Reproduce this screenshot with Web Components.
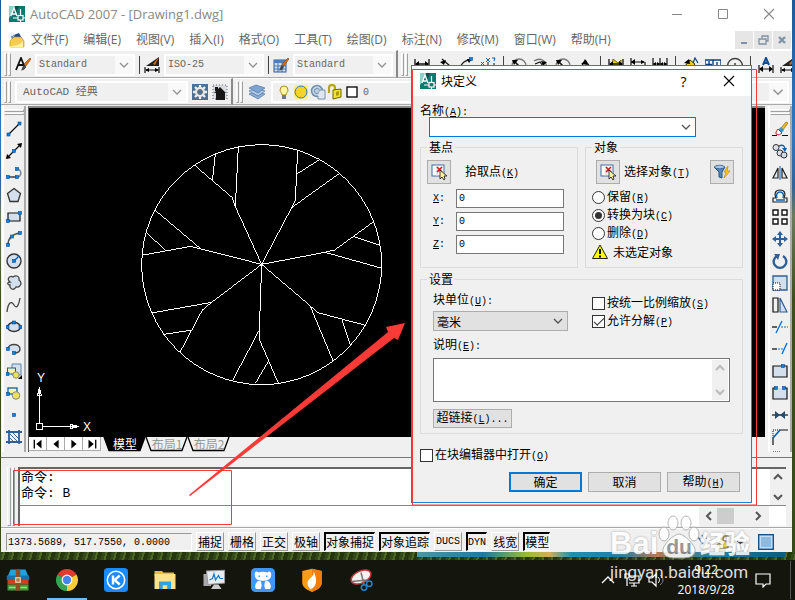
<!DOCTYPE html>
<html lang="zh-CN">
<head>
<meta charset="utf-8">
<title>AutoCAD 2007 - [Drawing1.dwg]</title>
<style>
html,body{margin:0;height:100%}
body{overflow:hidden;font:12px/14px "Noto Sans CJK SC",sans-serif;color:#000;
 --ui:"Open Sans","Noto Sans CJK SC",sans-serif;--face:#f0f0f0;--red:#f93a37;--blue:#0078d7}
</style>
</head>
<body>
<cad-desktop></cad-desktop>
<script>
const define=(name,css,html)=>customElements.define(name,class extends HTMLElement{
  constructor(){super();const r=this.attachShadow({mode:'open'});
    r.innerHTML='<style>*{box-sizing:border-box}'+css+'</style>'+(typeof html==='string'?html:'');
    this.build=typeof html==='function'?html:null;}
  connectedCallback(){if(this.build&&!this.done){this.done=true;this.shadowRoot.innerHTML+=this.build(this);} }
});

const B='#0a5fb4',N='#2f5f95';
const dot=(x,y)=>`<rect x="${x-1.5}" y="${y-1.5}" width="3" height="3" fill="#0a84e0" stroke="#044a90" stroke-width=".6"/>`;
const k=(d,c='#111',w=1.2,f='none')=>`<path d="${d}" fill="${f}" stroke="${c}" stroke-width="${w}"/>`;
const G='#d3dfec';
const brush='<path d="M15 1l1 1-5 7-2-2z" fill="#d96d10" stroke="#6a3405" stroke-width=".5"/><path d="M9 8l2 1.500c-1 3-3 4-5 4 1-1 1-4 3-5.500z" fill="#444"/>';
const dim=k('M1 2V12M15 2V12M2 7H14','#111',1.3)+'<path d="M1 7l4-3v6zM15 7l-4-3v6z"/>';
const ICONS={
 logo:'<rect width="16" height="16" fill="#0d7a72"/><path d="M0 0h6L3 8 0 12z" fill="#8fd0c8"/><path d="M6 0h4l-3 7z" fill="#045048"/><path d="M2 10L5 2l3 8M3 8h4" fill="none" stroke="#fff" stroke-width="1.300"/><path d="M4 12h5m5 0h2M11.500 3v6m0 5v2" stroke="#fff" stroke-width="1.200"/><rect x="9" y="9.500" width="5" height="4.500" fill="#0d7a72" stroke="#fff" stroke-width="1.200"/>',
 doc:'<path d="M2 4L10 1l5 9-10 5z" fill="#1d4f8c"/><path d="M1 9l4-4h7l3 4v6H1z" fill="#f5cc4e" stroke="#c58d19" stroke-width=".6"/><path d="M1 14c5 0 10-1 13-5v6H1z" fill="#fff0a8"/><path d="M3 0v6M0 3h6M1 1l4 4m0-4L1 5" stroke="#dbeaff" stroke-width=".8"/>',
 textstyle:k('M1 13L6 1l4 10M3 8h6','#111',1.8)+brush,
 dimstyle:'<path d="M2 9L15 0v9z" fill="#222"/><path d="M15 0l-6 7 2 1z" fill="#d96d10"/>'+k('M1 10v6M15 10v6M2 13h12')+'<path d="M1 13l4-2v4zM15 13l-4-2v4z"/>',
 tablestyle:'<rect x="1" y="3" width="12" height="12" fill="#cfe0f4" stroke="#2a5d9c"/><rect x="1" y="3" width="12" height="3" fill="#4a7fc0"/>'+k('M1 9h12M1 12h12M5 6v9M9 6v9','#2a5d9c',.8)+brush,
 dim,dimal:k('M2 9L12 15M6 2l8 7')+'<path d="M4 5l6-2-2 5z"/>',
 dimarc:k('M1 14C3 5 8 3 14 2','#222',1.4)+'<path d="M9 2l5 0-3 4z"/>'+dot(13,2),
 dimord:k('M3 8v6M8 5v9M14 6v8','#111',1)+k('M1 5l3 3m0-3L1 8M6 1l4 4m0-4L6 5M12 1h3l-1 3','#0a5fb4',1),
 dimrad:'<circle cx="8" cy="9" r="7" fill="none" stroke="#777" stroke-width="1.400"/>'+k('M8 9L3 4','#111',1.6)+'<path d="M1 3l6 0-4 5z"/>',
 jog:k('M1 4C7 0 13 3 14 11','#777',1.4)+k('M2 7l5-2 3 4','#111')+'<path d="M8 4l6 1-4 4z"/>',
 angle:k('M2 14L8 3l6 8')+'<path d="M4 7l5-4 2 5z"/>',
 quick:'<path d="M5 2l5 4 3-3v9H4z" fill="#f0d530" stroke="#7c6500"/>'+dim,
 base:k('M1 1v12M15 5v8M1 5h13')+'<path d="M1 5l4-3v6zM15 5l-4-2v4z"/>',
 cont:k('M1 1v12M8 1v12M15 1v12M1 7h14')+'<path d="M1 7l3-2v4zM8 7L5 5v4zM8 7l3-2v4zM15 7l-3-2v4z"/>',
 leader:'<path d="M2 9l5-6 5 4-5 6z" fill="#efcc1d" stroke="#342b00"/><path d="M1 6l5-4 1 5z"/>'+k('M10 6l2-5 3 5','#0a4080',1.2),
 tol:'<rect y="3" width="16" height="9" fill="#fff" stroke="#0a4080" stroke-width="1.500"/>'+k('M8 3v9M4 4v7M1 7.500h6M12 5v5','#0a4080',1.400),
 center:'<circle cx="8" cy="9" r="7.500" fill="none" stroke="#444" stroke-width="1.300"/>'+k('M8 6v6M5 9h6'),
 dimtext:k('M5 8L8 1l3 7M6 6h4','#0a4a98',2)+k('M1 8v8M15 8v8M2 12h12')+'<path d="M1 12l4-3v6zM15 12l-4-3v6z"/>',
 gear:'<rect width="16" height="16" fill="#4b7096"/><path d="M8 1v14M1 8h14M3 3l10 10M13 3L3 13" stroke="#eee" stroke-width="2.400"/><circle cx="8" cy="8" r="5" fill="#e8e8e8"/><circle cx="8" cy="8" r="2.500" fill="#4b7096" stroke="#777"/>',
 home:'<rect x="1" y="1" width="14" height="14" fill="#d9dde2" stroke="#666" stroke-dasharray="1 2"/><path d="M2 9l6-6 6 6h-1v7H4V9z" fill="#161616"/><path d="M3 3h3v4H3z" fill="#161616"/>',
 layers:'<path d="M0 10l7-3 9 3-7 5z" fill="#8cabd0" stroke="#4c75a8" stroke-width=".7"/><path d="M0 7l7-3 9 3-7 5z" fill="#b3cae5" stroke="#4c75a8" stroke-width=".7"/><path d="M0 4l7-3 9 3-7 5z" fill="#7da3d0" stroke="#4c75a8" stroke-width=".7"/>',
 bulb:'<path d="M4 6a4 4 0 1 1 8 0c0 2-2 3-2 5H6c0-2-2-3-2-5z" fill="#fff8a0" stroke="#aa8a20"/><path d="M6 11h4v4H6z" fill="#6c7a8c"/>',
 sun:'<rect x="1" y="1" width="14" height="14" rx="2" fill="#fff27a"/><circle cx="8" cy="8" r="6" fill="#f6d528" stroke="#3977b8"/>',
 freeze:'<circle cx="7" cy="7" r="5.500" fill="#c2d2e2" stroke="#6f8ead" stroke-width="1.500"/><circle cx="7" cy="7" r="2.500" fill="none" stroke="#6f8ead"/>'+k('M10 6h5v9H8v-3','#7890a8',1,'#dfe8f0'),
 lock:k('M2 9V4a3 3 0 0 1 6 0v4','#b5a800',2.200)+'<path d="M6 6l8-1v8l-8 2z" fill="#f1e233" stroke="#6e6400"/><path d="M9 8l3-1v4l-3 1z" fill="#ac9c00"/>',
 color:'<rect x="3" y="3" width="10" height="10" fill="#fff" stroke="#000" stroke-width="1.300"/>',
 line:k('M2.500 13.500l11-11')+dot(2.500,13.500)+dot(13.500,2.500),
 xline:k('M1 15L15 1')+'<path d="M0 16l1-5 4 4zM16 0l-1 5-4-4z"/>'+dot(8,8),
 pline:k('M1 12h10','#111')+k('M11 12c5 0 5-8 0-8','#7a8a9a',1.600)+dot(2,12)+dot(11,12)+dot(11,4),
 polygon:k('M8 1.500l6.500 5-2.500 8H4L1.500 6.500z','#333',1.300,G),
 rect:k('M2 4h12v8H2z','#111',1.200,G)+dot(2,12)+dot(14,4),
 arc:k('M2 14C2 7 7 3 14 2','#555',1.500)+dot(2,14)+dot(6,5.500)+dot(14,2),
 circle:'<circle cx="8" cy="8" r="7" fill="'+G+'" stroke="#333" stroke-width="1.400"/>'+k('M8 8l5-5','#0a5fb4')+dot(8,8),
 cloud:k('M4 7C0 4 4 0 7 2c3-2 7-1 6 3 4 3 1 8-3 7-2 4-7 2-6-2-3 0-3-3 0-3z','#444',1.300,G),
 spline:k('M1 15C2 6 5 3 8 8s5-1 6-7','#444',1.300),
 ellipse:'<ellipse cx="8" cy="8" rx="6.500" ry="4.500" fill="'+G+'" stroke="#333" stroke-width="1.400"/>'+dot(1.500,8)+dot(14.500,8)+dot(8,3.500),
 earc:k('M2 8c0-6 12-6 12 0 0 3-2 4-6 4','#444',1.400,G)+dot(2,8)+dot(8,12),
 insert:k('M6 1h9v11H6z','#5d84ad',1,G)+'<rect x="1.500" y="5" width="8" height="6" fill="#fff59a" stroke="#0a5fb4"/><circle cx="10" cy="12" r="3.200" fill="#ece25a" stroke="#888"/><path d="M12 16h4v-4z"/>'+dot(1.500,11),
 block:'<rect x="2" y="3" width="9" height="6" fill="#fff59a" stroke="#0a5fb4" stroke-width="1.300"/><circle cx="10" cy="10.500" r="3.800" fill="#ece25a" stroke="#888"/>'+dot(2,9),
 point:dot(8,8),
 hatch:k('M3 1v14M13 1v14M0 3h16M0 13h16',N,1.800)+k('M4 5l8 8M4 9l4 4M7 4l6 6',N,.9),
 grad:k('M3 2v14M13 2v14M0 4h16','#16436e',2),
 erase:'<path d="M9 7l5-6 2 1-5 7z" fill="#efbc22" stroke="#84510a" stroke-width=".6"/><path d="M6 9l3-3 3 3-3 4z" fill="#4c8dd0"/><path d="M4 11l2-3 4 4-3 2-3-1z" fill="#fff" stroke="#b23"/>'+k('M0 14.500h5m5 0h6','#111',1),
 copy:'<circle cx="4" cy="4.500" r="3" fill="#dde" stroke="#333"/><circle cx="8" cy="10" r="3" fill="#dde" stroke="#333"/><circle cx="12" cy="12" r="3" fill="#cdd8e5" stroke="#333"/>'+k('M7 3c4-2 6 0 6 4',B,1.500)+'<path d="M10 5h5l-2 4z" fill="#0a5fb4"/>',
 mirror:k('M8 1v14',B,1)+k('M6 3v10H1zM10 3v10h5z','#222',1.200,'#e6ecf2'),
 offset:k('M1 15h14v-4h-3c2-4 1-8-4-8S2 7 4 11H1z','#222',1.200)+k('M4 13h9M5 11c-3-8 9-8 6 0',B,1.400),
 array:k('M1 1h5v5H1zM10 1h5v5h-5zM1 10h5v5H1zM10 10h5v5h-5z','#111',1.400,'#fff'),
 move:k('M8 2v12M2 8h12',N,2)+'<path d="M8 0l3 4H5zM8 16l-3-4h6zM0 8l4-3v6zM16 8l-4-3v6z" fill="#2f5f95"/>',
 rotate:k('M5 3a6.300 6.300 0 1 0 6 0',N,2.400)+'<path d="M2 1l6 0-2 6z" fill="#2f5f95"/>',
 scale:k('M1 1h14v14H1z',N,1.300,G)+'<path d="M1 8h7v7H1z" fill="#fff" stroke="#111" stroke-dasharray="1 1"/>',
 stretch:k('M1 1h5v14H1z','#111',1.200)+k('M8 1l7 14H8z',N,1.200,G),
 trim:k('M0 8h5','#111',1.300)+'<path d="M9 8h7" stroke="#0a73d8" stroke-dasharray="2 1"/>'+k('M4 14L10 2','#0a73d8',1.400),
 extend:k('M0 8h5','#111',1.300)+'<path d="M6 8h6" stroke="#0a73d8" stroke-dasharray="2 1"/>'+k('M10 13l5-11','#0a73d8',1.400),
 break1:k('M1 3h14v11H1z','#111',1.200,G)+dot(11,3),
 break2:'<path d="M1 3h14v11H1z" fill="#d3dfec"/>'+k('M4 3H1v11h14V3h-3','#111',1.200)+dot(4,3)+dot(12,3),
 join:k('M0 8h16','#111',1.200)+'<path d="M3 4l5 4-5 4zM13 4L8 8l5 4z" fill="#244a70"/>',
 chamfer:k('M8 1h8M1 9v7','#111',1.200)+'<path d="M1 9V1h7" fill="none" stroke="#111" stroke-dasharray="1 1"/>'+k('M1 9l7-8',B,1.600),
 fillet:k('M8 2h8M1 10v6','#111',1.200)+'<path d="M1 9V1h7" fill="none" stroke="#111" stroke-dasharray="1 1"/>'+k('M1 10C2 4 5 3 14 2',B,1.800),
 pick:'<rect x="1" y="1" width="12" height="11" fill="#fff" stroke="#3b6ca8"/><path d="M6 1v11M6 8h7" stroke="#bcd0e8"/><path d="M6 3l5 5m0-5L6 8" stroke="#d81515" stroke-width="1.600"/><path d="M9 6v9l2-2 2 3 1-1-1-3h3z" fill="#fff4a0" stroke="#111" stroke-width=".8"/>',
 filter:'<path d="M0 3h11L8 8v6l-3-1V8z" fill="#5986b8" stroke="#23527f"/><ellipse cx="5.500" cy="3" rx="5" ry="1.800" fill="#a7c3df" stroke="#23527f" stroke-width=".7"/><path d="M14 2l-4 6h2l-2 6 6-7h-3z" fill="#ffcf1c" stroke="#b67a00" stroke-width=".6"/>',
 warn:'<path d="M8 1l7.500 13.500H.5z" fill="#ff0" stroke="#222" stroke-linejoin="round"/><path d="M8 5v5M8 11.500v2" stroke="#000" stroke-width="2"/>',
 down:k('M4 6l4 4 4-4','#555',1.300),up:k('M4 10l4-4 4 4','currentColor',2),dn:k('M4 6l4 4 4-4','currentColor',2),
 lt:k('M10 4L6 8l4 4','currentColor',2),rt:k('M6 4l4 4-4 4','currentColor',2),
 min:k('M3 8.500h10','#888',1),max:k('M3.500 3.500h9v9h-9z','#888',1),close:k('M3 3l10 10M13 3L3 13','currentColor',1.100),
 smin:k('M5 11h6','#8092a5',2),srest:k('M7 6V4h6v5h-2M4 7h7v5H4z','#8092a5',1.300),sclose:k('M5 5l6 6m0-6l-6 6','#8092a5',2.400),
 first:'<path d="M3 3h1.500v10H3zM12 3v10L6 8z"/>',prev:'<path d="M11 3v10L5 8z"/>',next:'<path d="M5 3v10l6-5z"/>',last:'<path d="M4 3v10l6-5zM11.500 3H13v10h-1.500z"/>',
 winrar:'<path d="M3 1h10l2 5H1z" fill="#1ba4dd"/><path d="M.500 5h15v3H.500z" fill="#1276ad"/><path d="M1 8h14v3H1z" fill="#cf3c25"/><path d="M1 11h14v4H1z" fill="#3c9c3c"/><path d="M2 13h12" stroke="#b0dc62"/><path d="M6.500 1h3v14h-3z" fill="#8f4e22"/><rect x="6.500" y="6.500" width="3" height="3" fill="#a9754a" stroke="#e6d8b6" stroke-width=".8"/>',
 chrome:'<path d="M8 8L1.700 4.300A7.300 7.300 0 0 1 14.300 4.300z" fill="#e23b2e"/><path d="M8 8l6.300-3.700A7.300 7.300 0 0 1 8 15.300z" fill="#f9cc34"/><path d="M8 8v7.300A7.300 7.300 0 0 1 1.700 4.300z" fill="#35a352"/><circle cx="8" cy="8" r="3.600" fill="#fff"/><circle cx="8" cy="8" r="2.800" fill="#4384ee"/>',
 kapp:'<rect width="16" height="16" rx="2.500" fill="#1a8bff"/><circle cx="8" cy="8" r="5.800" fill="none" stroke="#fff"/><path d="M6 5v6M10.500 5L7 8l3.500 3" fill="none" stroke="#fff" stroke-width="1.600"/>',
 folder:'<path d="M1 2h5l1 1h7v2H1z" fill="#e7b84b"/><path d="M1 4h14v10H1z" fill="#ffe28a"/><path d="M4 14V9h8v5h-2.500v-2.500h-3V14z" fill="#2fa3dd"/>',
 monitor:'<path d="M1 4h5v8H1z" fill="#aaa"/><path d="M3 2l12-.500v8.500l-11 1z" fill="#e9eef2" stroke="#999" stroke-width=".7"/><path d="M5 8l2-1 1-3 1 4 2-3 1 2h2" fill="none" stroke="#1f7bc8" stroke-width=".8"/><path d="M8 11h3l2 3H6z" fill="#ccc"/>',
 bear:'<rect width="16" height="16" rx="3" fill="#3e97fb"/><path d="M2.500 4.500C2.500 2 4 2 5 3c2-.6 4-.6 6 0 1-1 2.500-1 2.500 1.500 0 3-2.500 4-5.500 4s-5.500-1-5.500-4z" fill="#fff"/><path d="M5 8.500c-2 1-3 4.500-1.500 5.500h3C7.500 12 7 10 6.500 8.800zM11 8.500c2 1 3 4.500 1.500 5.500h-3C8.500 12 9 10 9.500 8.800z" fill="#fff"/><path d="M5 5.500h1M10 5.500h1" stroke="#3e97fb"/>',
 flame:'<path d="M1.500 2L8 .500 14.500 2v8c0 3-4 5-6.500 6-2.500-1-6.500-3-6.500-6z" fill="#ff9b17"/><path d="M8 .500L14.500 2v8c0 3-4 5-6.500 6z" fill="#f07c0a"/><path d="M9 2c1 4-4 5-4 8 0 2 1 3 2 4 4-1 5-6 2-12z" fill="#fff"/>',
 snip:'<ellipse cx="8" cy="6" rx="7" ry="4" transform="rotate(-25 8 6)" fill="#f6f0f0" stroke="#c13a3a"/><path d="M2 9l10-1M8 3l2 8" stroke="#777"/><circle cx="10" cy="13" r="1.800" fill="none" stroke="#2584c8"/><circle cx="13.500" cy="10.500" r="1.800" fill="none" stroke="#2584c8"/>',
 chev:k('M2 11l6-6 6 6','#fff',1.300),net:k('M5 4h10v7H5M10 11v3M7 14h6','#fff',1.200)+k('M1 2h4v4H1zM3 6v8','#fff',1.200),
 vol:k('M1 6h3l4-4v12l-4-4H1z','#fff',1.200)+k('M10 5c2 2 2 4 0 6','#fff',1)+k('M12 3c4 3 4 7 0 10','#888',1),
 note:k('M1 2h14v10h-4l-3 3v-3H1z','#fff',1.200),
 sat:k('M2 3l6 8M6 1l4 9M11 4l-4 8M14 6c-3 2-6 4-8 9','#49698d',1.500),
 tlock:k('M7 8V5a3 3 0 0 1 6 0v4','#968a3e',1.800)+'<path d="M4 7h8v7H4z" fill="#e7cf46" stroke="#665a10"/><path d="M0 11l4-3v6z" fill="#8a7a20"/>',
 tri:'<path d="M1 6h14l-7 6z" fill="#222"/>',
 clean:'<rect x=".7" y=".7" width="14.600" height="14.600" fill="#c5dcf0" stroke="#1b4f80" stroke-width="1.400"/><rect x="3" y="3" width="10" height="10" fill="#8fbae0"/>'
};
define('cad-icon',':host{display:inline-flex;flex:none;width:16px;height:16px}svg{width:100%;height:100%;overflow:hidden}',
 h=>`<svg viewBox="0 0 16 16" aria-hidden="true">${ICONS[h.getAttribute('name')]||''}</svg>`);
const I=(n,c='')=>`<cad-icon name="${n}"${c?` class="${c}"`:''}></cad-icon>`;

define('cad-grip',':host{display:flex;flex:none;gap:1px;width:7px;align-self:stretch}:host([flat]){flex-direction:column;width:20px;height:6px}i{flex:1;border:1px solid;border-color:#fff #a0a0a0 #a0a0a0 #fff}','<i></i><i></i>');
define('cad-sep',':host{width:1px;height:18px;background:#444;flex:none}','');

define('cad-combo',`:host{display:grid;flex:none;border:2px solid #fff;background:#f0f0f0;height:22px;color:#666}
 select,cad-icon{grid-area:1/1}select{appearance:none;border:0;background:none;width:100%;font:10px "Liberation Mono","Noto Sans CJK SC",monospace;color:inherit;padding:0 2px;margin:0;min-width:0;opacity:1}
 cad-icon{justify-self:end;width:18px;height:18px;background:#fff;padding:1px;opacity:.6;pointer-events:none}
 :host([kind=dialog]){height:20px;border:1px solid #adadad;background:#e1e1e1;color:#000}
 :host([kind=dialog]) select{font:12px "Noto Sans CJK SC",sans-serif;padding:0 3px}
 :host([kind=dialog]) cad-icon{background:none;opacity:1}
 :host([kind=name]){height:20px;border:1px solid var(--blue);background:#fff;color:#000}:host([kind=name]) cad-icon{opacity:1}
 :host([wide]) select{font-family:"Liberation Mono","Noto Sans CJK SC",monospace;font-size:11px;padding-left:6px}`,
 h=>`<select aria-label="${h.getAttribute('label')}"><option>${h.getAttribute('value')||''}</option></select>${I('down')}`);

define('cad-titlebar',`:host{display:flex;align-items:center;height:28px;background:#fff;padding:0 17px 0 8px;font:13px/18px var(--ui);color:#888}
 .t{margin-left:5px;flex:1}button{border:0;background:none;padding:0;width:46px;height:28px;display:grid;place-items:center;color:#888}div{display:flex;margin-right:-17px}`,
 `${I('logo')}<span class="t">AutoCAD 2007 - [Drawing1.dwg]</span><div><button aria-label="最小化">${I('min')}</button><button aria-label="最大化">${I('max')}</button><button aria-label="关闭">${I('close')}</button></div>`);

define('cad-menubar',`:host{display:flex;align-items:center;height:22px;background:#fff;padding:1px 1px 0 8px;font:12px/18px var(--ui);color:#666}
 nav{display:flex;flex:1;gap:15px;margin-left:6px}nav button{border:0;background:none;padding:0;font:inherit;color:inherit;white-space:nowrap}
 .w{display:flex;gap:1px}.w button{border:0;padding:0;background:#e6e6e6;width:18px;height:18px;display:grid;place-items:center}`,
 `${I('doc')}<nav>${['文件(F)','编辑(E)','视图(V)','插入(I)','格式(O)','工具(T)','绘图(D)','标注(N)','修改(M)','窗口(W)','帮助(H)'].map(t=>`<button>${t}</button>`).join('')}</nav>
 <div class="w"><button aria-label="最小化图形">${I('smin')}</button><button aria-label="还原图形">${I('srest')}</button><button aria-label="关闭图形">${I('sclose')}</button></div>`);

define('cad-toolbar',`:host{display:flex;align-items:center;gap:4px;padding:2px 3px 1px;min-width:0;overflow:hidden;border-right:2px solid #888;border-bottom:1px solid #aaa;border-top:1px solid #fff}
 :host([last]){flex:1;border-right:0}:host([loose]){gap:6px}::slotted(cad-sep){margin:0 1px}`,'<cad-grip></cad-grip><slot></slot>');

define('cad-toolrows',`:host{display:block;background:var(--face)}.r{display:flex;height:28px}.r+.r{height:27px}
 cad-combo{width:100px}cad-combo.ws{width:173px}.lay{display:flex;align-items:center;flex:1;gap:1px;border:2px solid #fff;height:22px;padding-left:3px;font:10px "Liberation Mono",monospace;color:#666;min-width:0}
 .lay span{flex:1;margin-left:2px}.lay cad-icon:last-child{background:#fff;width:18px;height:18px;opacity:.6}.s cad-sep{margin:0}`,
 `<div class="r"><cad-toolbar class="s">${I('textstyle')}<cad-combo label="文字样式" value="Standard"></cad-combo><cad-sep></cad-sep>${I('dimstyle')}<cad-combo label="标注样式" value="ISO-25"></cad-combo><cad-sep></cad-sep>${I('tablestyle')}<cad-combo label="表格样式" value="Standard"></cad-combo></cad-toolbar>
 <cad-toolbar last loose>${['dim','dimal','dimarc','dimord'].map(n=>I(n)).join('')}<cad-sep></cad-sep>${['dimrad','jog','dimrad','angle'].map(n=>I(n)).join('')}<cad-sep></cad-sep>${['quick','base','cont'].map(n=>I(n)).join('')}<cad-sep></cad-sep>${['leader','tol','center'].map(n=>I(n)).join('')}<cad-sep></cad-sep>${I('dimtext')}${I('dimstyle')}</cad-toolbar></div>
 <div class="r"><cad-toolbar><cad-combo wide class="ws" label="工作空间" value="AutoCAD 经典"></cad-combo>${I('gear')}${I('home')}</cad-toolbar>
 <cad-toolbar last loose>${I('layers')}<div class="lay">${['bulb','sun','freeze','lock','color'].map(n=>I(n)).join('')}<span>0</span>${I('down')}</div></cad-toolbar></div>`);

define('cad-toolstrip',`:host{display:flex;flex-direction:column;align-items:center;flex:none;width:24px;height:100%;min-height:0;padding-top:3px;gap:6px;overflow:hidden;border-left:2px solid #fff;border-right:2px solid #aaa}
 cad-grip{align-self:center}`,
 h=>`<cad-grip flat></cad-grip>${h.getAttribute('tools').split(' ').map(n=>I(n)).join('')}`);

define('cad-drawing',`:host{display:block;flex:1;min-height:0;background:#000;overflow:hidden}svg{display:block;width:100%;height:100%}`,
 `<svg shape-rendering="crispEdges" fill="none" stroke="#fff" aria-label="图形">
 <g transform="translate(101 22) scale(.33333)" stroke-width="3"><circle cx="395" cy="404" r="360"/>
 <path d="M395 403L316 230 325 50M316 230L306 202 193 105M247 152L256 72M395 403L485 233 627 131M485 233L496 210 503 61M502 131L568 89M395 403L585 367 753 414M585 367L614 360 731 275M671 320L748 345M395 403L540 527 609 692M540 527L563 548 707 586M636 569L661 645M395 403L388 600 307 753M388 600V628L446 762M416 693L376 760M395 403L245 517 65 549M245 517L217 540 151 665M183 601L100 613M395 403L213 357 76 241M213 357L182 349 35 376M107 362L49 307"/></g>
 <g transform="translate(-29 -108)"><path d="M36.500 423.500h6v6h-6zM39.500 423V388M43 426.500h35M37.500 395.500h4l-2-8zM70.500 424.500v4l8-2z"/>
 </g><g fill="#fff" stroke="none" font-family="Liberation Sans,sans-serif" font-size="12" transform="translate(-29 -108)"><text x="83" y="431">X</text><text x="37" y="382">Y</text></g></svg>`);

define('cad-layouts',`:host{display:flex;height:15px;background:var(--face);flex:none;font:12px/13px "Noto Sans CJK SC",sans-serif}
 .n{display:flex}.n button{padding:0;width:18px;height:14px;border:0;border-right:1px solid #aaa;border-bottom:1px solid #aaa;background:#fff;display:grid;place-items:center}.n cad-icon{width:14px;height:14px}
 .t{display:flex;margin-left:3px}.t button{border:0;background:none;padding:0;font:inherit;height:15px;width:42px;color:#999;display:grid}.t button>*{grid-area:1/1}svg{width:42px;height:15px;overflow:visible}span{align-self:start;justify-self:center}.t .on{color:#fff}`,
 `<div class="n">${['first','prev','next','last'].map((n,i)=>`<button aria-label="布局导航 ${i+1}">${I(n)}</button>`).join('')}</div><div class="t">${[['模型',1],['布局1'],['布局2']].map(([t,on])=>`<button class="${on?'on':''}"><svg viewBox="0 0 42 15"><path d="M0 0l5 13.500h31l5-13.500" fill="${on?'#000':'#f0f0f0'}" stroke="#000" stroke-width="1.300"/></svg><span>${t}</span></button>`).join('')}</div>`);

define('cad-workspace',`:host{display:flex;flex:1;min-height:0;background:var(--face);padding:1px 0 5px 1px;border-bottom:1px solid #777}
 .c{display:flex;flex-direction:column;flex:1;min-width:0;margin:0 3px 0 2px;border-top:2px solid #888;border-left:1px solid #555}`,
 `<cad-toolstrip tools="line xline pline polygon rect arc circle cloud spline ellipse earc insert block point hatch grad"></cad-toolstrip>
 <div class="c"><cad-drawing></cad-drawing><cad-layouts></cad-layouts></div>
 <cad-toolstrip tools="erase copy mirror offset array move rotate scale stretch trim extend break1 break2 join chamfer fillet"></cad-toolstrip>`);

define('cad-command',`:host{display:flex;height:70px;background:var(--face);padding:9px 6px 1px 6px;border-bottom:1px solid #aaa;gap:3px;color:#555;flex:none}
 cad-grip{width:8px}.m{flex:1;display:flex;flex-direction:column;border:solid #666;border-width:2px 0 0 2px;background:#fff;min-width:0}
 .h{flex:1;display:flex;border-bottom:1px solid #888}.x{flex:1;font:13px/16px "Liberation Mono","Noto Sans CJK SC",monospace;color:#000;padding:1px 0 0 1px}.x div{height:16px;white-space:pre}
 .v{display:flex;flex-direction:column;justify-content:space-between;background:var(--face);width:16px}
 .i{display:flex;height:20px}input{flex:1;min-width:0;border:0;background:none;padding:0 2px;font:12px "Liberation Mono",monospace}
 .s{display:flex;align-items:center;background:var(--face);width:70px;margin-right:17px;padding-left:2px}.s b{width:17px;height:16px;background:#cdcdcd;margin-right:16px}`,
 `<cad-grip></cad-grip><div class="m"><div class="h"><div class="x"><div>命令:</div><div>命令: B</div></div><div class="v">${I('up')}${I('dn')}</div></div><div class="i"><input aria-label="命令行"><div class="s">${I('lt')}<b></b>${I('rt')}</div></div></div>`);

define('cad-status',`:host{display:flex;align-items:center;gap:4px;height:24px;background:var(--face);padding:2px 1px 0 5px;border-top:1px solid #fff;flex:none;font:12px/16px "Noto Sans CJK SC",sans-serif}
 .p{width:186px;height:18px;border:1px solid;border-color:#999 #fff #fff #999;font:10px/18px "Liberation Mono",monospace;padding-left:1px;white-space:pre;flex:none}
 button{height:19px;border:1px solid;border-color:#fff #999 #999 #fff;background:none;padding:0 1px;font:inherit;white-space:nowrap;flex:none}
 button.l{font:10px/18px "Liberation Mono",monospace;padding:0 1px}button.on{border-color:#000 #fff #fff #000;border-width:2px 1px 1px 2px;padding:0}
 .f{flex:1}cad-icon:last-child{margin:0 17px 0 9px}.a{width:9px}`,
 `<div class="p">1373.5689, 517.7550, 0.0000</div>${[['捕捉'],['栅格'],['正交'],['极轴'],['对象捕捉',1],['对象追踪',1],['DUCS'],['DYN',1],['线宽'],['模型',1]].map(([t,o])=>`<button class="${o?'on':''} ${/[A-Z]/.test(t)?'l':''}" aria-pressed="${!!o}">${t}</button>`).join('')}<span class="f"></span>${I('sat')}${I('tlock')}${I('tri','a')}${I('clean')}`);

define('cad-window',`:host{display:flex;flex-direction:column;flex:1;min-height:0;margin:0 3px 0 1px;background:var(--face)}`,
 `<cad-titlebar></cad-titlebar><cad-menubar></cad-menubar><cad-toolrows></cad-toolrows><cad-workspace></cad-workspace><cad-command></cad-command><cad-status></cad-status>`);

define('task-bar',`:host{display:flex;align-items:center;height:40px;flex:none;background:#14160d;color:#fff;padding:0 4px 0 6px;font:12px/20px var(--ui)}
 .a{display:flex;gap:9px;margin-left:-8px}.a button{width:40px;height:40px;padding:0;border:0;background:none;display:grid;place-items:center}.a cad-icon{width:24px;height:24px}.a .on{box-shadow:inset 0 -2px #76b9ed}
 .f{flex:1}.t{display:flex;gap:8px;align-items:center;margin-right:11px}.c{text-align:center;width:62px}.n{margin:0 19px 0 18px}hr{width:1px;height:38px;border:0;margin:0;background:#555}`,
 `<div class="a">${[['winrar','压缩文件'],['chrome','浏览器'],['kapp','音乐'],['folder','资源管理器'],['monitor','监视器'],['bear','网盘'],['flame','安全'],['snip','截图']].map(([n,t])=>`<button class="${n==='chrome'?'on':''}" aria-label="${t}">${I(n)}</button>`).join('')}</div><span class="f"></span><div class="t">${I('chev')}${I('net')}${I('vol')}</div><div class="c">9:22<br>2018/9/28</div>${I('note','n')}<hr>`);

define('cad-label',`:host{display:inline-flex;align-items:baseline;white-space:nowrap}span{font:10px/14px "Liberation Mono",monospace}`,
 h=>{const key=h.getAttribute('key'),end=h.getAttribute('end')||'';return `<slot></slot>${key?`<span>(<u>${key}</u>)${end}</span>`:''}`});

define('cad-dialog',`:host{display:block;border:1px solid #1e82d2;background:var(--face);font:12px/14px "Noto Sans CJK SC",sans-serif;color:#000}
 header{display:flex;align-items:center;height:30px;background:#fff;padding:0 0 0 8px}header h2{flex:1;font:12px/16px "Noto Sans CJK SC",sans-serif;margin:0 0 0 5px}
 header button{border:0;background:none;width:45px;height:28px;padding:0;display:grid;place-items:center;font:14px "Open Sans",sans-serif}
 form{padding:7px 8px 10px;margin:0}.name{display:block;height:14px}.nm{margin:0 47px 3px 9px}
 fieldset{border:1px solid #dcdcdc;margin:0;min-width:0;padding:0}legend{margin-left:6px;padding:0 2px;line-height:14px}
 .g{display:grid;grid-template-columns:158px 1fr;gap:7px;margin-bottom:4px}.g fieldset{height:128px}
 .row{display:flex;align-items:center}.sq{width:24px;height:24px;padding:0;border:1px solid #adadad;background:#e1e1e1;display:grid;place-items:center;flex:none}
 .b{padding:6px 13px 0 6px}.b .row{gap:14px;margin-bottom:5px}.xyz{display:grid;grid-template-columns:23px 1fr;gap:4px 0;padding-left:6px;align-items:center;font:10px/14px "Liberation Mono",monospace}
 .xyz input{height:19px;border:1px solid #777;background:#fff;padding:0 2px;margin:0;min-width:0;width:100%;font:inherit}
 .o{padding:6px 8px 0 6px}.o .row{gap:4px;margin-left:4px}.o .row label{flex:1}.o .opts{display:grid;grid-auto-rows:18px;margin-top:4px}
 .opt{display:flex;align-items:center;gap:2px;height:18px}input[type=radio],input[type=checkbox]{appearance:none;margin:0;width:13px;height:13px;border:1px solid #333;background:#fff;flex:none;display:grid;place-items:center}
 input[type=radio]{border-radius:50%}input[type=radio]:checked:after{content:"";width:7px;height:7px;border-radius:50%;background:#333}
 input[type=checkbox]:checked:after{content:"";width:9px;height:4px;border:solid #333;border-width:0 0 1px 1px;transform:translateY(-1px) rotate(-45deg)}
 .w{display:flex;align-items:center;gap:5px;height:20px}
 .s{height:162px;padding:0 12px}.s legend{margin-left:-6px}.top{display:grid;grid-template-columns:135px 1fr;gap:24px;margin-top:6px}.top .l{display:flex;flex-direction:column;gap:2px}.top .r{padding-top:2px}
 .d{display:block;margin:6px 0 4px}.ta{display:flex;height:44px;border:1px solid #777;background:#fff;padding:1px}textarea{flex:1;border:0;resize:none;padding:2px;background:none;outline:0;overflow:hidden;font:inherit}
 .sb{display:flex;flex-direction:column;justify-content:space-between;color:#bbb;background:var(--face)}
 .btn{font:inherit;border:1px solid #adadad;background:#e1e1e1;padding:0 2px;height:19px;display:inline-grid;place-items:center;margin:0}.hy{margin-top:7px;width:79px}
 .open{margin:13px 0 9px;height:16px;gap:2px;width:max-content}.f{display:flex;justify-content:flex-end;gap:6px;padding-right:3px}.f .btn{width:73px;height:20px}.f .def{border:2px solid var(--blue)}`,
 `<header>${I('logo')}<h2>块定义</h2><button aria-label="帮助">?</button><button aria-label="关闭">${I('close')}</button></header>
 <form onsubmit="return false"><span class="name"><cad-label key="A" end=":">名称</cad-label></span><cad-combo class="nm" kind="name" label="名称"></cad-combo>
 <div class="g"><fieldset><legend>基点</legend><div class="b"><div class="row"><button type="button" class="sq" id="pk" aria-label="拾取点">${I('pick')}</button><label for="pk"><cad-label key="K">拾取点</cad-label></label></div>
 <div class="xyz">${['X','Y','Z'].map(a=>`<label for="p${a}"><u>${a}</u>:</label><input id="p${a}" value="0">`).join('')}</div></div></fieldset>
 <fieldset><legend>对象</legend><div class="o"><div class="row"><button type="button" class="sq" id="so" aria-label="选择对象">${I('pick')}</button><label for="so"><cad-label key="T">选择对象</cad-label></label><button type="button" class="sq" aria-label="快速选择">${I('filter')}</button></div>
 <div class="opts">${[['保留','R'],['转换为块','C'],['删除','D']].map(([t,c],i)=>`<label class="opt"><input type="radio" name="o"${i===1?' checked':''}><cad-label key="${c}">${t}</cad-label></label>`).join('')}</div><div class="w">${I('warn')}<span>未选定对象</span></div></div></fieldset></div>
 <fieldset class="s"><legend>设置</legend><div class="top"><div class="l"><cad-label key="U" end=":">块单位</cad-label><cad-combo kind="dialog" label="块单位" value="毫米"></cad-combo></div>
 <div class="r"><label class="opt"><input type="checkbox"><cad-label key="S">按统一比例缩放</cad-label></label><label class="opt"><input type="checkbox" checked><cad-label key="P">允许分解</cad-label></label></div></div>
 <label class="d" for="de"><cad-label key="E" end=":">说明</cad-label></label><div class="ta"><textarea id="de"></textarea><div class="sb">${I('up')}${I('dn')}</div></div>
 <button type="button" class="btn hy"><cad-label key="L" end="...">超链接</cad-label></button></fieldset>
 <label class="opt open"><input type="checkbox"><cad-label key="O">在块编辑器中打开</cad-label></label>
 <div class="f"><button class="btn def">确定</button><button type="button" class="btn">取消</button><button type="button" class="btn"><cad-label key="H">帮助</cad-label></button></div></form>`);

define('mark-up',`:host{position:absolute;inset:0;pointer-events:none}svg{width:100%;height:100%}`,
 `<svg><g fill="none" stroke="#f93a37"><path d="M412.500 69.500h344v435.500h-344zM13.500 470.500h218v54h-218z"/></g><path d="M189 495L388 332 386 327 405 323 398 340 394 338 190 496z" fill="#f93a37"/></svg>`);

define('water-mark',`:host{position:absolute;left:610px;top:514px;width:146px;pointer-events:none;color:#fff;opacity:.85;white-space:nowrap}
 .a{display:grid;grid-template-columns:48px 42px 1fr;align-items:end;height:46px;font:bold 31px/32px "Liberation Sans","Noto Sans CJK SC",sans-serif;text-shadow:0 0 2px #888}.a b{font-size:25px}.a i{font-style:normal;font-size:21px;line-height:26px;text-align:center;color:#888;text-shadow:none}
 .b{font:17px/24px Roboto,sans-serif}svg{position:absolute;left:48px;top:0;width:42px;height:45px}.a span,.a i,.a b{position:relative}`,
 `<svg viewBox="0 0 42 45" fill="#fff" stroke="#aaa"><ellipse cx="6" cy="20" rx="5" ry="7"/><ellipse cx="15" cy="9" rx="5" ry="7"/><ellipse cx="28" cy="9" rx="5" ry="7"/><ellipse cx="36" cy="20" rx="5" ry="7"/><path d="M21 20c5 0 18 12 16 18s-8 6-16 6-14 0-16-6 11-18 16-18z"/></svg><div class="a"><span>Bai</span><i>du</i><b>经验</b></div><div class="b">jingyan.baidu.com</div>`);

define('cad-desktop',`:host{position:relative;display:flex;flex-direction:column;height:100vh;background:linear-gradient(#1d5a9b,#2f78c4 22%,#31649b 31%,#6b7b5b 36%,#3f4e1c 50%,#34491a)}
 .g{height:8px;flex:none;background:repeating-linear-gradient(105deg,#34491a 0 3px,#4f6726 3px 5px,#26370f 5px 9px);display:flex}.g i{margin-left:417px;margin-right:10px;flex:1;height:5px;background:linear-gradient(90deg,#4b98a2,#1d7aa3 18%,#9bbd31 30%,#cfae5f 36%,#1d90b2 42%,#1b7fab 55%,#b97854 65%,#1682a5 80%,#0d5d7f)}
 cad-dialog{position:absolute;left:411px;top:65px;width:341px}`,
 `<cad-window></cad-window><div class="g"><i></i></div><task-bar></task-bar><cad-dialog></cad-dialog><mark-up></mark-up><water-mark></water-mark>`);
</script>
</body>
</html>
